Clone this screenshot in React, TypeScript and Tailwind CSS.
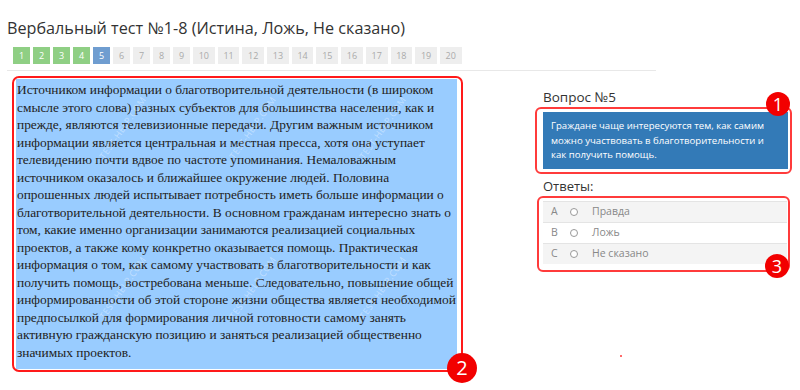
import React from 'react';

const pages = Array.from({ length: 20 }, (_, i) => i + 1);

const answers = [
  { key: 'A', label: 'Правда' },
  { key: 'B', label: 'Ложь' },
  { key: 'C', label: 'Не сказано' },
];

// строки текста как в исходнике
const passageLines = [
  'Источником информации о благотворительной деятельности (в широком',
  'смысле этого слова) разных субъектов для большинства населения, как и',
  'прежде, являются телевизионные передачи. Другим важным источником',
  'информации является центральная и местная пресса, хотя она уступает',
  'телевидению почти вдвое по частоте упоминания. Немаловажным',
  'источником оказалось и ближайшее окружение людей. Половина',
  'опрошенных людей испытывает потребность иметь больше информации о',
  'благотворительной деятельности. В основном гражданам интересно знать о',
  'том, какие именно организации занимаются реализацией социальных',
  'проектов, а также кому конкретно оказывается помощь. Практическая',
  'информация о том, как самому участвовать в благотворительности и как',
  'получить помощь, востребована меньше. Следовательно, повышение общей',
  'информированности об этой стороне жизни общества является необходимой',
  'предпосылкой для формирования личной готовности самому занять',
  'активную гражданскую позицию и заняться реализацией общественно',
  'значимых проектов.',
];

const questionLines = [
  'Граждане чаще интересуются тем, как самим',
  'можно участвовать в благотворительности и',
  'как получить помощь.',
];

const watermarks = [
  { left: 'left-[70px]', top: 'top-[40px]' },
  { left: 'left-[200px]', top: 'top-[40px]' },
  { left: 'left-[330px]', top: 'top-[40px]' },
  { left: 'left-[70px]', top: 'top-[200px]' },
  { left: 'left-[200px]', top: 'top-[200px]' },
  { left: 'left-[330px]', top: 'top-[200px]' },
];

function pageClass(n: number) {
  if (n < 5) return 'bg-[#8fcf84] text-white';
  if (n === 5) return 'bg-[#6f9dd0] text-white';
  return 'bg-[#eeeeee] text-[#aaaaaa]';
}

function Badge({ n, size }: { n: number; size: 'sm' | 'lg' }) {
  return (
    <span
      className={
        'flex items-center justify-center rounded-full bg-[#f20000] text-white font-["Open_Sans",sans-serif] leading-none ' +
        (size === 'lg' ? 'w-[30px] h-[30px] text-[20px]' : 'w-[24px] h-[24px] text-[18px]')
      }
    >
      {n}
    </span>
  );
}

export default function App() {
  return (
    <div className="relative w-[800px] h-[390px] overflow-hidden bg-white font-['Open_Sans',sans-serif] text-[#333]">
      {/* заголовок */}
      <h1 className="pl-[7px] pt-[17px] text-[16.2px] leading-[22px] text-[#333]">
        Вербальный тест №1-8 (Истина, Ложь, Не сказано)
      </h1>

      {/* номера вопросов */}
      <div className="flex gap-[3px] pl-[13px] mt-[8px]">
        {pages.map((n) => (
          <span
            key={n}
            className={
              'h-[17px] flex items-center justify-center text-[9px] ' +
              (n < 10 ? 'w-[17px] ' : 'w-[21.7px] ') +
              pageClass(n)
            }
          >
            {n}
          </span>
        ))}
      </div>
      <div className="ml-[7px] mt-[6px] w-[649px] h-px bg-[#e8e8e8]" />

      <div className="flex pt-[5px]">
        {/* текст */}
        <div className="relative ml-[12px] w-[451px] h-[296px] rounded-[7px] border-2 border-[#ff1a1a] pt-[1px] pl-[2px] pr-[4px]">
          <div className="relative h-[290px] overflow-hidden bg-[#99ccff] pl-[1px] pt-[2px] font-['Liberation_Serif',serif] text-[13.4px] leading-[17.5px] text-[#222]">
            {passageLines.map((line, i) => (
              <div key={i} className="whitespace-nowrap">
                {line}
              </div>
            ))}
            {watermarks.map((w, i) => (
              <span
                key={i}
                className={
                  'absolute -rotate-[55deg] text-[9px] tracking-wider text-white/40 font-["Open_Sans",sans-serif] ' +
                  w.left +
                  ' ' +
                  w.top
                }
              >
                TEST-HELP.COM
              </span>
            ))}
          </div>
          <div className="absolute right-[-16px] bottom-[-13px]">
            <Badge n={2} size="lg" />
          </div>
        </div>

        {/* вопрос и ответы */}
        <div className="ml-[72px] w-[257px]">
          <div className="pl-[8px] pt-[12px] text-[13.5px] leading-[18px] text-[#333]">Вопрос №5</div>
          <div className="relative mt-[1px] rounded-[6px] border-2 border-[#ff3b3b] pl-[6px] pr-[2px] pt-[3px] pb-[3px]">
            <div className="bg-[#337ab7] pl-[8px] pt-[7px] pb-[6px] text-[9.6px] leading-[14.5px] text-white">
              {questionLines.map((line, i) => (
                <div key={i} className="whitespace-nowrap">
                  {line}
                </div>
              ))}
            </div>
            <div className="absolute right-0 top-[-17px]">
              <Badge n={1} size="sm" />
            </div>
          </div>

          <div className="pl-[8px] pt-[4px] text-[13px] leading-[17px] text-[#333]">Ответы:</div>
          <div className="relative mt-[1px] ml-[2px] w-[253px] rounded-[6px] border-2 border-[#ff3b3b] pl-[4px] pr-[1px] pt-[3px] pb-[6px]">
            {answers.map((a, i) => (
              <div
                key={a.key}
                className={
                  'flex h-[21px] items-center border-t border-[#e4e4e4] text-[10.5px] text-[#888] ' +
                  (i === 1 ? 'bg-white' : 'bg-[#f4f4f4]')
                }
              >
                <span className="w-[20px] pl-[8px]">{a.key}</span>
                <span className="ml-[7px] h-[8px] w-[8px] rounded-full border border-[#999] bg-white" />
                <span className="ml-[14px]">{a.label}</span>
              </div>
            ))}
            <div className="absolute right-[-1px] bottom-[-8px]">
              <Badge n={3} size="sm" />
            </div>
          </div>
        </div>
      </div>

      <span className="absolute left-[620px] top-[355px] h-[2px] w-[2px] bg-[#ff6b6b]" />
    </div>
  );
}
